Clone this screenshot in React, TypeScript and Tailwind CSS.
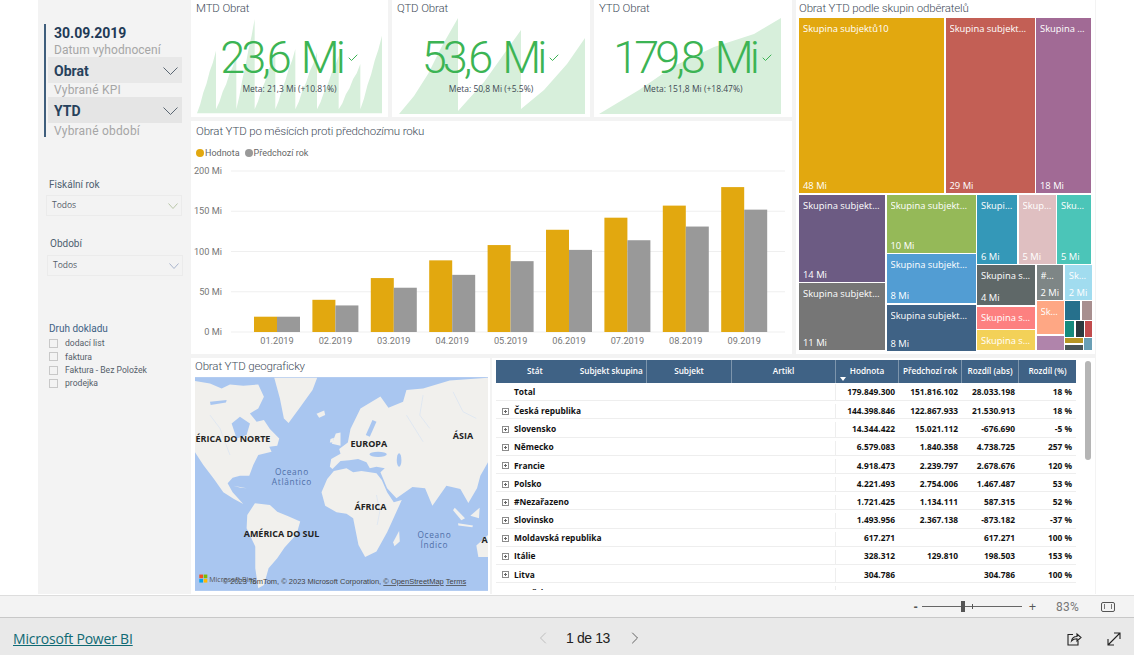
import { ChevronLeft, ChevronRight, Check } from "lucide-react";

const din = "font-['Roboto',sans-serif]";
const seg = "font-['Open_Sans','Noto_Sans',sans-serif]";
const titleCls = `${din} font-light text-[11.5px] leading-[15px] tracking-[-0.15px] text-[#3f4d5a]`;

function saw(peaks: [number, number][], start: number, base: number) {
  let d = `M${start} ${base}`;
  let x0 = start;
  peaks.forEach(([x, y], i) => {
    const y0 = i === 0 ? base : base - 12;
    d += ` L${x0} ${y0}`;
    const n = 6;
    for (let k = 1; k <= n; k++) {
      const t = k / n;
      const yy = y0 + (y - y0) * t;
      d += ` L${x0 + (x - x0) * t} ${yy + (k % 2 === 0 ? 0 : 5)}`;
    }
    d += ` L${x} ${base}`;
    x0 = x;
  });
  return d + ` L${x0} ${base} Z`;
}

function Chevron({ w, h, color }: { w: number; h: number; color: string }) {
  return (
    <svg width={w} height={h} viewBox={`0 0 ${w} ${h}`} fill="none" stroke={color} strokeWidth="1">
      <path d={`M0.5 0.5 L${w / 2} ${h - 0.5} L${w - 0.5} 0.5`} />
    </svg>
  );
}

function KpiCard({ title, value, meta, spark }: { title: string; value: string; meta: string; spark: React.ReactNode }) {
  return (
    <div className="relative overflow-hidden bg-white">
      <div className={`${titleCls} pl-[5px] pt-[1px]`}>{title}</div>
      {spark}
      <div className="absolute inset-x-0 top-[30px] flex flex-col items-center">
        <div className="flex items-start">
          <span className={`${din} text-[45px] font-light leading-[56px] tracking-[-4px] [word-spacing:6px] text-[#3cb454]`}>{value}</span>
          <Check className="ml-[5px] mt-[22px] h-[12px] w-[12px] text-[#3cb454]" strokeWidth={2} />
        </div>
        <div className={`${seg} -mt-[4px] text-[8.5px] leading-[14px] text-[#3f4a55]`}>{meta}</div>
      </div>
    </div>
  );
}

function Select({ label, className, color }: { label: string; className: string; color: string }) {
  return (
    <div className={`${seg} flex h-[21px] w-[136px] items-center justify-between border border-[#ebebeb] pl-[5px] pr-[3px] text-[8.5px] text-[#55606a] ${className}`}>
      {label}
      <Chevron w={10} h={6} color={color} />
    </div>
  );
}

function Tile({ className, name, value }: { className: string; name?: string; value?: string }) {
  return (
    <div className={`${seg} flex min-w-0 flex-col justify-between overflow-hidden px-[4px] pb-[1px] pt-[4px] text-[9.4px] font-medium leading-[13px] whitespace-nowrap text-white ${className}`}>
      <span className="block overflow-hidden text-ellipsis">{name}</span>
      <span>{value}</span>
    </div>
  );
}

function Treemap() {
  return (
    <div className="flex h-[333px] w-[292px] flex-col gap-[1.5px]">
      <div className="flex h-[175px] gap-[1.5px]">
        <Tile className="w-[145px] bg-[#e2a80f]" name="Skupina subjektů10" value="48 Mi" />
        <Tile className="w-[89px] bg-[#c35f55]" name="Skupina subjektů12" value="29 Mi" />
        <Tile className="w-[55px] bg-[#a16a95]" name="Skupina subjektů3" value="18 Mi" />
      </div>
      <div className="flex h-[156px] gap-[1.5px]">
        <div className="flex w-[86px] flex-col gap-[1.5px]">
          <Tile className="h-[87px] bg-[#6c5b83]" name="Skupina subjektů7" value="14 Mi" />
          <Tile className="h-[67px] bg-[#767676]" name="Skupina subjektů1" value="11 Mi" />
        </div>
        <div className="flex w-[89px] flex-col gap-[1.5px]">
          <Tile className="h-[58px] bg-[#95b958]" name="Skupina subjektů14" value="10 Mi" />
          <Tile className="h-[49px] bg-[#529dd3]" name="Skupina subjektů16" value="8 Mi" />
          <Tile className="h-[46px] bg-[#3f6285]" name="Skupina subjektů11" value="8 Mi" />
        </div>
        <div className="flex w-[114px] flex-col gap-[1.5px]">
          <div className="flex h-[69px] gap-[1.5px]">
            <Tile className="w-[40px] bg-[#3498b8]" name="Skupina" value="6 Mi" />
            <Tile className="w-[37px] bg-[#dfbfc1]" name="Skupina" value="5 Mi" />
            <Tile className="w-[34px] bg-[#4bc5b8]" name="Skupina" value="5 Mi" />
          </div>
          <div className="flex h-[85px] gap-[1.5px]">
            <div className="flex w-[58px] flex-col gap-[1.5px]">
              <Tile className="h-[40px] bg-[#5f6868]" name="Skupina subjektů" value="4 Mi" />
              <Tile className="h-[22px] justify-start bg-[#fd8080]" name="Skupina subjektů" />
              <Tile className="h-[20px] justify-start bg-[#f3d158]" name="Skupina subjektů" />
            </div>
            <div className="flex w-[55px] flex-col gap-[1.5px]">
              <div className="flex h-[35px] gap-[1.5px]">
                <Tile className="w-[27px] bg-[#7e8686]" name="#Nez" value="2 Mi" />
                <Tile className="w-[27px] bg-[#a1dcef]" name="Skup" value="2 Mi" />
              </div>
              <div className="flex h-[49px] gap-[1.5px]">
                <div className="flex w-[27px] flex-col gap-[1.5px]">
                  <Tile className="h-[33px] justify-start bg-[#fea784]" name="Skup" />
                  <div className="h-[14px] bg-[#b084ab]" />
                </div>
                <div className="flex w-[27px] flex-col gap-[1.5px]">
                  <div className="flex h-[19px] gap-[1.5px]">
                    <div className="w-[15px] bg-[#26708c]" />
                    <div className="w-[10px] bg-[#a88f8f]" />
                  </div>
                  <div className="flex h-[15.5px] gap-[1.5px]">
                    <div className="w-[9px] bg-[#158a7d]" />
                    <div className="w-[8px] bg-[#2b3a3f]" />
                    <div className="w-[7px] bg-[#c14b4d]" />
                  </div>
                  <div className="flex h-[12px] gap-[1.5px]">
                    <div className="flex w-[18px] flex-col gap-[1.5px]">
                      <div className="h-[5px] bg-[#b89624]" />
                      <div className="h-[5px] bg-[#4a5558]" />
                    </div>
                    <div className="w-[8px] bg-[#6a9fb5]" />
                  </div>
                </div>
              </div>
            </div>
          </div>
        </div>
      </div>
    </div>
  );
}

const bars: [string, number, number][] = [
  ["01.2019", 19, 19], ["02.2019", 40, 33], ["03.2019", 67, 55], ["04.2019", 89, 71], ["05.2019", 108, 88],
  ["06.2019", 127, 102], ["07.2019", 142, 114], ["08.2019", 157, 131], ["09.2019", 180, 152],
];

function BarChart() {
  return (
    <svg width="601" height="189" viewBox="191 165 601 189" className="block">
      {[200, 150, 100, 50, 0].map((v) => {
        const y = 332 - v * 0.805;
        return (
          <g key={v}>
            <line x1="231" x2="785" y1={y} y2={y} stroke="#efefef" />
            <text x="222" y={y + 3} textAnchor="end" fontSize="9.2" fontFamily="Roboto" fill="#777">{v} Mi</text>
          </g>
        );
      })}
      {bars.map(([m, a, b], i) => {
        const c = 277 + i * 58.4;
        return (
          <g key={m}>
            <rect x={c - 23} width="23" y={332 - a * 0.805} height={a * 0.805} fill="#e2a80f" />
            <rect x={c} width="23" y={332 - b * 0.805} height={b * 0.805} fill="#999999" />
            <text x={c} y="344" textAnchor="middle" fontSize="9.2" fontFamily="Roboto" fill="#777">{m}</text>
          </g>
        );
      })}
    </svg>
  );
}

function WorldMap() {
  return (
    <svg width="293" height="214" viewBox="15 66 880 642" className="block">
      <rect x="15" y="66" width="880" height="642" fill="#a9c6f0" />
      <g fill="#f1f0ed">
        <path d="M15 78 L60 85 L95 100 L120 88 L160 92 L205 88 L222 125 L205 160 L180 175 L200 200 L222 195 L240 222 L268 250 L262 272 L238 275 L245 290 L205 300 L190 330 L178 362 L150 362 L128 368 L113 385 L128 412 L160 447 L132 432 L100 412 L72 372 L40 330 L15 292 Z" />
        <path d="M253 68 L382 68 L368 105 L328 160 L296 204 L282 190 L270 130 Z" />
        <path d="M380 176 L403 166 L406 180 L388 188 Z" />
        <path d="M172 480 L195 445 L240 450 L262 470 L295 484 L331 500 L320 538 L284 578 L262 610 L236 640 L222 690 L205 700 L196 640 L196 575 L170 520 Z" />
        <path d="M420 335 L424 312 L452 296 L448 282 L474 262 L482 222 L512 160 L572 124 L596 158 L640 140 L650 105 L700 100 L780 76 L895 68 L895 322 L872 362 L862 400 L836 444 L812 402 L770 392 L728 452 L706 400 L668 396 L620 430 L592 400 L572 352 L585 340 L560 335 L540 340 L530 322 L505 312 L478 316 L452 318 L428 342 Z" />
        <path d="M395 412 L412 372 L432 348 L470 340 L490 352 L515 348 L560 355 L576 375 L592 412 L612 442 L636 435 L602 510 L592 532 L560 590 L526 606 L506 570 L490 490 L470 476 L440 472 L406 452 Z" />
        <path d="M610 562 L628 528 L630 560 L614 574 Z" />
        <path d="M860 572 L895 540 L895 606 L866 606 Z" />
        <path d="M426 266 L438 235 L452 232 L452 272 Z" />
        <path d="M422 252 L432 248 L430 262 L420 262 Z" />
        <path d="M795 458 L826 490 L815 496 L790 466 Z" />
        <path d="M842 482 L870 458 L868 490 Z" />
        <path d="M805 505 L850 512 L848 517 L806 512 Z" />
        <path d="M130 392 L170 400 L152 398 Z" />
      </g>
      <g fill="#a9c6f0">
        <path d="M125 205 L150 185 L180 205 L170 240 L140 250 Z" />
        <ellipse cx="565" cy="298" rx="26" ry="8" />
        <ellipse cx="628" cy="315" rx="7" ry="20" />
        <path d="M528 240 L548 195 L560 200 L540 245 Z" />
        <path d="M60 140 L110 135 L108 142 L62 150 Z" />
      </g>
      <g fill="none" stroke="#cfdff4" strokeWidth="1.5">
        <path d="M560 420 L570 470 L562 510" />
        <path d="M700 120 L690 180 L720 220" />
        <path d="M790 110 L820 170 L860 190" />
        <path d="M650 180 L700 260" />
        <path d="M60 180 L90 220 L120 300" />
      </g>
      <g fontFamily="'Open Sans'" fontWeight="700" fontSize="27" fill="#222" textAnchor="middle">
        <text x="129" y="262">ÉRICA DO NORTE</text>
        <text x="537" y="277">EUROPA</text>
        <text x="820" y="251">ÁSIA</text>
        <text x="542" y="465">ÁFRICA</text>
        <text x="275" y="545">AMÉRICA DO SUL</text>
        <text x="885" y="565">A</text>
      </g>
      <g fontFamily="'Open Sans'" fontSize="25" fill="#4f6fa8" textAnchor="middle" letterSpacing="2">
        <text x="306" y="359">Oceano</text>
        <text x="306" y="389">Atlântico</text>
        <text x="734" y="548">Oceano</text>
        <text x="734" y="578">Índico</text>
      </g>
      <g>
        <rect x="28" y="659" width="11" height="11" fill="#f25022" />
        <rect x="41" y="659" width="11" height="11" fill="#7fba00" />
        <rect x="28" y="672" width="11" height="11" fill="#00a4ef" />
        <rect x="41" y="672" width="11" height="11" fill="#ffb900" />
      </g>
      <text x="58" y="680" fontFamily="'Open Sans'" fontSize="21" fill="#555">Microsoft Bing</text>
      <text x="98" y="688" fontFamily="'Liberation Sans'" fontSize="22.5" fill="#444">
        © 2023 TomTom, © 2023 Microsoft Corporation, <tspan textDecoration="underline">© OpenStreetMap</tspan>  <tspan textDecoration="underline">Terms</tspan>
      </text>
    </svg>
  );
}

const rows: [string, string, string, string, string][] = [
  ["Česká republika", "144.398.846", "122.867.933", "21.530.913", "18 %"],
  ["Slovensko", "14.344.422", "15.021.112", "-676.690", "-5 %"],
  ["Německo", "6.579.083", "1.840.358", "4.738.725", "257 %"],
  ["Francie", "4.918.473", "2.239.797", "2.678.676", "120 %"],
  ["Polsko", "4.221.493", "2.754.006", "1.467.487", "53 %"],
  ["#Nezařazeno", "1.721.425", "1.134.111", "587.315", "52 %"],
  ["Slovinsko", "1.493.956", "2.367.138", "-873.182", "-37 %"],
  ["Moldavská republika", "617.271", "", "617.271", "100 %"],
  ["Itálie", "328.312", "129.810", "198.503", "153 %"],
  ["Litva", "304.786", "", "304.786", "100 %"],
  ["Lotyšsko", "286.980", "274.458", "12.522", "5 %"],
];

const grid = "grid grid-cols-[151px_85px_104px_63px_63px_57px_57px]";

function Row({ cells, expand }: { cells: [string, string, string, string, string]; expand: boolean }) {
  return (
    <div className={`${grid} h-[18.2px] items-center border-b-[1.5px] border-[#eeeeee] text-[8.4px] font-bold text-[#111] ${expand ? "pt-[3px]" : "pt-[1px]"}`}>
      <div className="flex items-center">
        <span className="flex w-[18px] justify-center">
          {expand && (
            <span className="relative h-[7px] w-[7px] border border-[#8c8c8c]">
              <span className="absolute left-[1px] top-[2px] h-[1px] w-[3px] bg-[#666]" />
              <span className="absolute left-[2px] top-[1px] h-[3px] w-[1px] bg-[#666]" />
            </span>
          )}
        </span>
        {cells[0]}
      </div>
      <div />
      <div className="h-full border-r border-[#eeeeee]" />
      {cells.slice(1).map((c, i) => (
        <div key={i} className="pr-[4px] text-right">{c}</div>
      ))}
    </div>
  );
}

function PivotTable() {
  const head = "flex h-full items-center justify-center border-r border-[#7d95ac]";
  return (
    <div className={`${seg} relative h-full w-[603px] overflow-hidden bg-white pl-[4px] pt-[2px]`}>
      <div className={`${grid} h-[23px] w-[580px] items-center bg-[#3f6285] text-[8.2px] font-semibold text-white`}>
        <div className="flex h-full items-center border-r border-[#7d95ac]">
          <span className="ml-[31px]">Stát</span>
          <span className="ml-[37px]">Subjekt skupina</span>
        </div>
        <div className={head}>Subjekt</div>
        <div className={head}>Artikl</div>
        <div className={`${head} relative`}>
          Hodnota
          <span className="absolute bottom-[2px] left-[4px] h-0 w-0 border-x-[3px] border-t-[4px] border-x-transparent border-t-white" />
        </div>
        <div className={head}>Předchozí rok</div>
        <div className={head}>Rozdíl (abs)</div>
        <div className="flex h-full items-center justify-center">Rozdíl (%)</div>
      </div>
      <div className="h-[207px] w-[580px] overflow-hidden">
        <Row cells={["Total", "179.849.300", "151.816.102", "28.033.198", "18 %"]} expand={false} />
        {rows.map((r) => (
          <Row key={r[0]} cells={r} expand />
        ))}
      </div>
      <div className="absolute left-[593px] top-[3px] h-[99px] w-[6px] rounded-[3px] bg-[#b5b5b5]" />
    </div>
  );
}

export default function App() {
  return (
    <div className="flex h-[655px] w-[1134px] flex-col overflow-hidden bg-white">
      <main className="mx-[38px] flex h-[594px] bg-[#f3f3f3]">
        <aside className={`${din} w-[153px] shrink-0`}>
          <div className="ml-[6px] mt-[24px] h-[113px] w-[138px] border-l-[2px] border-[#3f5e7c]">
            <div className="pl-[8px] text-[14px] font-bold leading-[18px] text-[#1f3a56]">30.09.2019</div>
            <div className="pl-[8px] pt-[2px] text-[12px] leading-[13px] tracking-[0.05px] text-[#a6a6a6]">Datum vyhodnocení</div>
            <div className="ml-[2px] flex h-[26px] items-center justify-between bg-[#e8e8e8] pl-[6px] pr-[4px] pt-[2px] text-[14px] font-bold text-[#27415c]">
              Obrat
              <Chevron w={15} h={8} color="#5a6672" />
            </div>
            <div className="pl-[8px] pt-[1px] text-[12px] leading-[13px] tracking-[0.2px] text-[#a6a6a6]">Vybrané KPI</div>
            <div className="ml-[2px] flex h-[26px] items-center justify-between bg-[#e5e5e5] pl-[6px] pr-[4px] pt-[2px] text-[14px] font-bold text-[#27415c]">
              YTD
              <Chevron w={15} h={8} color="#5a6672" />
            </div>
            <div className="pl-[8px] pt-[1px] text-[12px] leading-[15px] tracking-[0.2px] text-[#a6a6a6]">Vybrané období</div>
          </div>
          <div className="ml-[11px] mt-[41px] text-[10px] leading-[14px] text-[#4e5f70]">Fiskální rok</div>
          <Select label="Todos" className="ml-[8px] mt-[3px]" color="#b9c6a8" />
          <div className="ml-[12px] mt-[21px] text-[10px] leading-[14px] text-[#4e5f70]">Období</div>
          <Select label="Todos" className="ml-[9px] mt-[4px]" color="#a9b4cc" />
          <div className="ml-[11px] mt-[46px] text-[10px] leading-[14px] text-[#3f6285]">Druh dokladu</div>
          <div className="ml-[11px] mt-[1px] flex flex-col">
            {["dodací list", "faktura", "Faktura - Bez Položek", "prodejka"].map((t) => (
              <label key={t} className={`${din} flex h-[13.3px] items-center gap-[7px] text-[8.6px] text-[#55606a]`}>
                <span className="h-[9px] w-[9px] border border-[#c8c8c8]" />
                {t}
              </label>
            ))}
          </div>
        </aside>

        <div className="grid grid-cols-[197px_198px_198px_299px] grid-rows-[117px_233px_236px] gap-[4px]">
          <KpiCard
            title="MTD Obrat"
            value="23,6 Mi"
            meta="Meta: 21,3 Mi (+10.81%)"
            spark={
              <svg width="196" height="104" viewBox="0 0 588 312" className="absolute left-[1px] top-[14px]">
                <path fill="#d7efdb" d={saw([[72, 110], [133, 125], [188, 15], [250, 110], [310, 105], [375, 115], [440, 125], [505, 150], [570, 65]], 15, 298)} />
              </svg>
            }
          />
          <KpiCard
            title="QTD Obrat"
            value="53,6 Mi"
            meta="Meta: 50,8 Mi (+5.5%)"
            spark={
              <svg width="198" height="104" viewBox="0 0 198 104" className="absolute left-0 top-[14px]">
                <path fill="#d7efdb" d="M7 100 L22 82 L36 60 L50 32 L66 4 L66 97 L92 68 L129 16 L129 95 L152 76 L175 50 L193 24 L193 100 Z" />
              </svg>
            }
          />
          <KpiCard
            title="YTD Obrat"
            value="179,8 Mi"
            meta="Meta: 151,8 Mi (+18.47%)"
            spark={
              <svg width="198" height="104" viewBox="0 0 198 104" className="absolute left-0 top-[14px]">
                <path fill="#d7efdb" d="M5 100 L45 76 L80 52 L120 33 L160 20 L187 4 L187 100 Z" />
              </svg>
            }
          />
          <section className="row-span-2 bg-white pl-[3px]">
            <div className={`${titleCls} pt-[1px]`}>Obrat YTD podle skupin odběratelů</div>
            <div className="mt-[2px]">
              <Treemap />
            </div>
          </section>
          <section className="col-span-3 overflow-hidden bg-white">
            <div className={`${titleCls} pl-[5px] pt-[3px]`}>Obrat YTD po měsících proti předchozímu roku</div>
            <div className={`${din} mt-[7px] flex items-center pl-[5px] text-[9px] leading-[14px] text-[#666]`}>
              <span className="mr-[1px] h-[8px] w-[8px] rounded-full bg-[#e2a80f]" />
              Hodnota
              <span className="ml-[5px] mr-[1px] h-[8px] w-[8px] rounded-full bg-[#999999]" />
              Předchozí rok
            </div>
            <div className="mt-[5px]">
              <BarChart />
            </div>
          </section>
          <div className="col-span-4 flex gap-[2px]">
            <section className="w-[299px] bg-white pl-[4px]">
              <div className={`${titleCls} pt-[1px]`}>Obrat YTD geograficky</div>
              <div className="mt-[3px]">
                <WorldMap />
              </div>
            </section>
            <PivotTable />
          </div>
        </div>
      </main>

      <div className="mt-[1px] flex h-[23px] items-center justify-end border-y border-t-[#dddddd] border-b-[#c8c8c8] bg-[#f3f3f3] pr-[19px] text-[#555]">
        <span className="mr-[4px] text-[12px] font-bold leading-none">-</span>
        <span className="relative mr-[7px] h-[1px] w-[100px] bg-[#666]">
          <span className="absolute -top-[5px] left-[39px] h-[11px] w-[4px] bg-[#555]" />
          <span className="absolute -top-[2px] left-[50px] h-[5px] w-[1px] bg-[#555]" />
        </span>
        <span className={`${seg} text-[13px] leading-none`}>+</span>
        <span className={`${din} ml-[20px] text-[12px] tracking-[0.2px] text-[#777]`}>83%</span>
        <span className="ml-[22px] flex h-[10px] w-[14px] items-center justify-center rounded-[2px] border border-[#555]">
          <span className="h-[5px] w-[8px] border-x border-[#777]" />
        </span>
      </div>

      <footer className="relative flex h-[37px] items-center justify-between bg-[#e9e9e9] px-[13px] pt-[4px]">
        <a className="font-['Open_Sans',sans-serif] text-[14px] tracking-[-0.2px] text-[#0f6a74] underline">Microsoft Power BI</a>
        <div className="absolute left-[533px] top-0 flex h-full items-center pt-[3px] font-['Liberation_Sans',sans-serif] text-[14px] tracking-[-0.4px] text-[#222]">
          <ChevronLeft className="h-[20px] w-[20px] text-[#b5b5b5]" strokeWidth={1} />
          <span className="ml-[13px]">1 de 13</span>
          <ChevronRight className="ml-[15px] h-[20px] w-[20px] text-[#555]" strokeWidth={1.1} />
        </div>
        <div className="flex items-center gap-[25px]">
          <svg width="15" height="14" viewBox="0 0 15 14" fill="none" stroke="#222" strokeWidth="1.1">
            <path d="M6 2.5 H1 V13 H11 V9" />
            <path d="M4.5 9 C5 6 7 4.5 10 4.5 V2 L14 5.5 L10 9 V6.8 C8 6.8 6 7.3 4.5 9 Z" />
          </svg>
          <svg width="14" height="14" viewBox="0 0 14 14" fill="none" stroke="#222" strokeWidth="1.1">
            <path d="M1 13 L13 1 M7 1 H13 V7 M1 7 V13 H7" />
          </svg>
        </div>
      </footer>
    </div>
  );
}
